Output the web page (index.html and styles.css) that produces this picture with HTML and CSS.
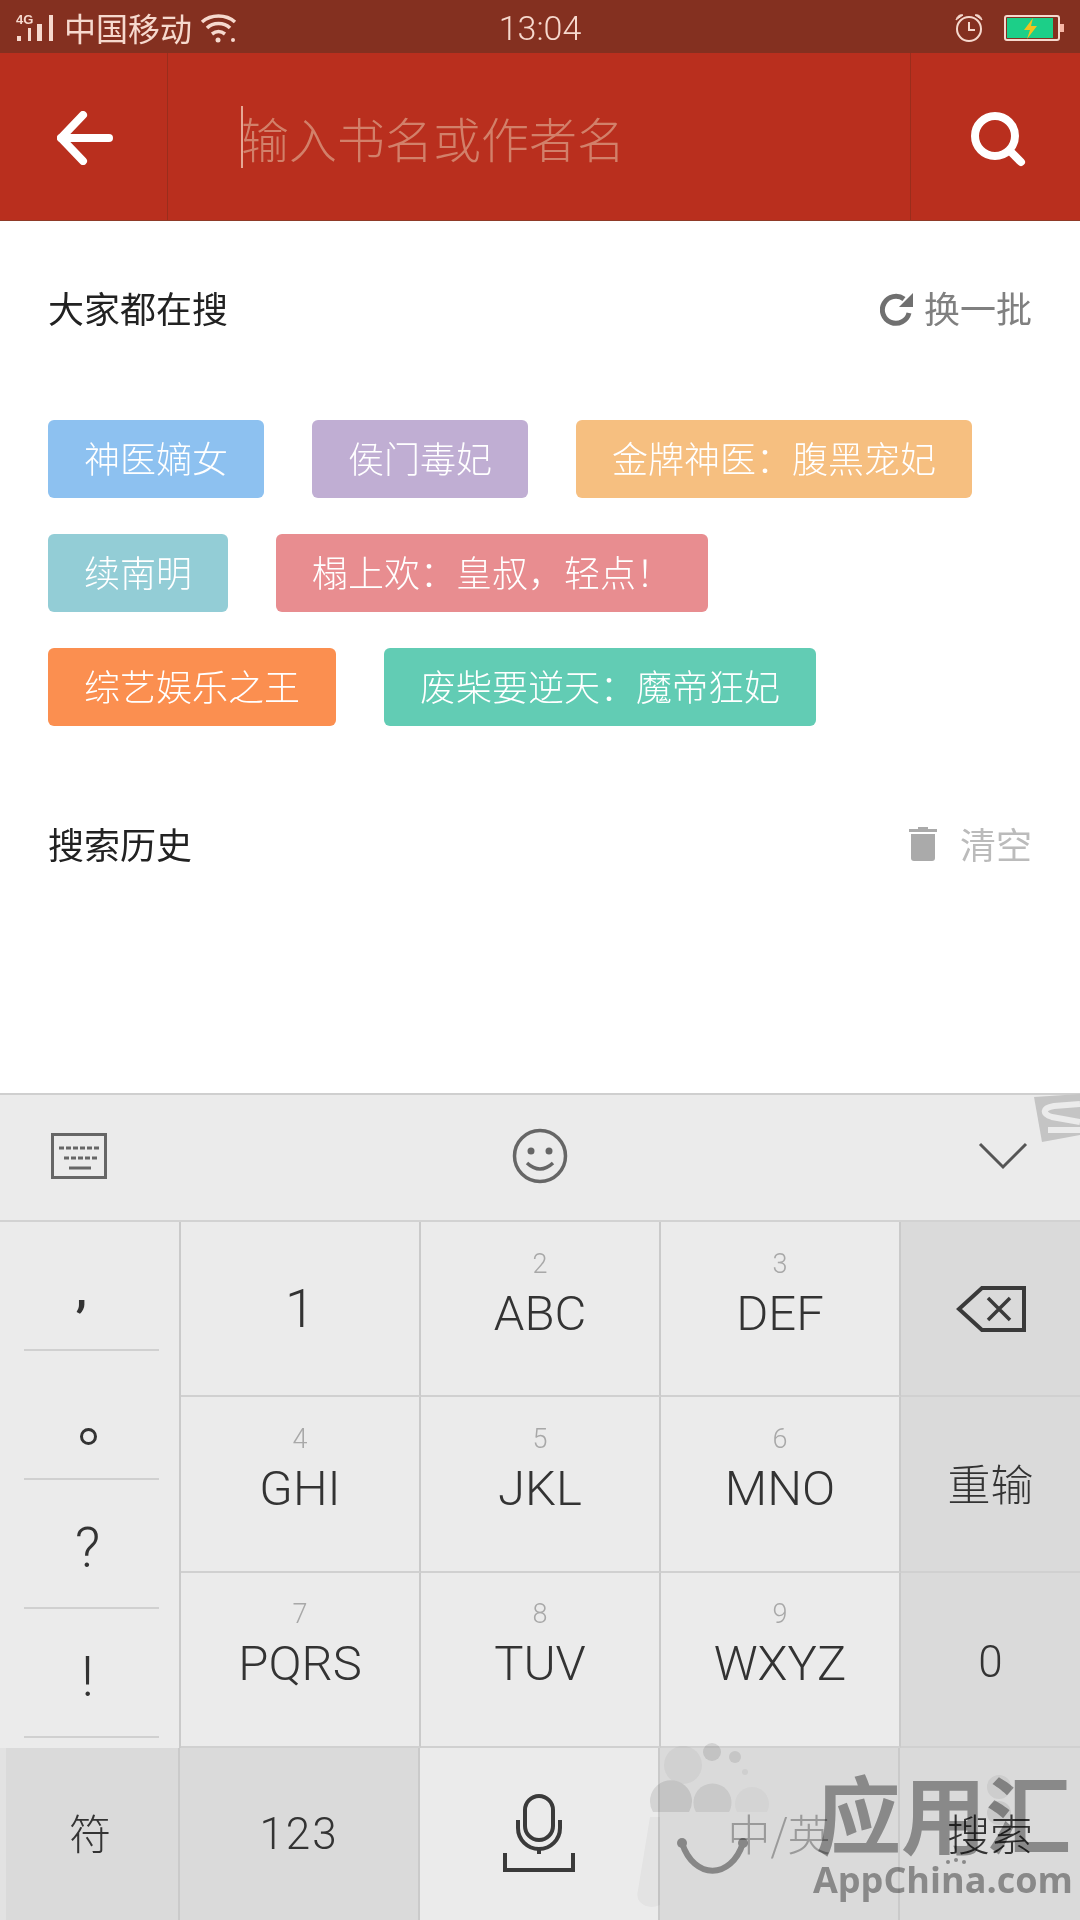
FILE: index.html
```html
<!DOCTYPE html>
<html lang="zh">
<head>
    <meta charset="UTF-8">
    <title>搜索</title>
    <link rel="stylesheet" href="styles.css">
</head>
<body>
    <div class="phone">
        <!-- status bar -->
        <div class="statusbar">
            <div class="status-left">
                <svg class="signal" width="38" height="28" viewBox="0 0 38 28">
                    <text x="0" y="10" class="signal-label">4G</text>
                    <rect x="1" y="22" width="4" height="5" fill="#f6d9ce"/>
                    <rect x="12" y="14" width="3" height="13" fill="#f6d9ce"/>
                    <rect x="21" y="10" width="5" height="17" fill="#f6d9ce"/>
                    <rect x="33" y="1" width="4" height="26" fill="#f6d9ce"/>
                </svg>
                <span class="carrier">中国移动</span>
                <svg class="wifi" width="38" height="30" viewBox="0 0 38 30" fill="none" stroke="#f6d9ce" stroke-width="3.5">
                    <path d="M2 9C11 1 26 1 35 9"/>
                    <path d="M7 15C13 9 24 9 30 15"/>
                    <path d="M12 21C16 18 21 18 25 21" stroke-dasharray="14 3"/>
                    <circle cx="18" cy="27" r="2.5" fill="#f6d9ce" stroke="none"/>
                    <circle cx="33" cy="27" r="2" fill="#f6d9ce" stroke="none"/>
                </svg>
            </div>
            <span class="clock">13:04</span>
            <div class="status-right">
                <svg width="30" height="30" viewBox="0 0 30 30" fill="none" stroke="#f6d9ce">
                    <circle cx="15" cy="16" r="12" stroke-width="2"/>
                    <path d="M15 9V17H21" stroke-width="2"/>
                    <path d="M2 7C3 3 6 1 9 2Z M28 7C27 3 24 1 21 2Z" fill="#f6d9ce" stroke-width="1"/>
                </svg>
                <svg width="60" height="26" viewBox="0 0 60 26">
                    <rect x="1" y="1" width="54" height="24" rx="2" fill="none" stroke="#f6d9ce" stroke-width="2"/>
                    <rect x="3" y="3" width="46" height="20" fill="#1ccf88"/>
                    <rect x="56" y="9" width="4" height="8" fill="#f6b6a6"/>
                    <path d="M29 3L20 15H26L23 24L33 11H27Z" fill="#f2c21f"/>
                </svg>
            </div>
        </div>

        <!-- search bar -->
        <div class="searchbar">
            <div class="search-back">
                <svg width="56" height="54" viewBox="0 0 56 54" fill="none" stroke="#fff" stroke-width="8" stroke-linecap="round" stroke-linejoin="round">
                    <path d="M26 4L4 27L26 50"/>
                    <path d="M4 27H52"/>
                </svg>
            </div>
            <div class="search-input"><span class="caret"></span>输入书名或作者名</div>
            <div class="search-btn">
                <svg width="56" height="56" viewBox="0 0 56 56" fill="none" stroke="#fff" stroke-linecap="round">
                    <circle cx="24" cy="24" r="20" stroke-width="8"/>
                    <path d="M39 39L50 50" stroke-width="8"/>
                </svg>
            </div>
        </div>

        <!-- content -->
        <div class="content">
            <div class="section-head">
                <span class="section-title">大家都在搜</span>
                <span class="section-action">
                    <svg class="icon-refresh" width="34" height="34" viewBox="0 0 34 34" fill="none">
                        <path d="M29 21A13.5 13.5 0 1 1 24 7" stroke="#707070" stroke-width="5"/>
                        <path d="M33 1V15H19Z" fill="#707070"/>
                    </svg>
                    换一批
                </span>
            </div>
            <div class="tags">
                <span class="tag tag-blue">神医嫡女</span>
                <span class="tag tag-purple">侯门毒妃</span>
                <span class="tag tag-sand">金牌神医：腹黑宠妃</span>
                <span class="tag tag-teal">续南明</span>
                <span class="tag tag-rose">榻上欢：皇叔，轻点！</span>
                <span class="tag tag-orange">综艺娱乐之王</span>
                <span class="tag tag-green">废柴要逆天：魔帝狂妃</span>
            </div>
            <div class="section-head section-history">
                <span class="section-title">搜索历史</span>
                <span class="section-action action-clear">
                    <svg width="30" height="36" viewBox="0 0 30 36" fill="#aaaaaa">
                        <path d="M10 2H20V4H29V7H1V4H10Z"/>
                        <path d="M3 9H27V33Q27 36 24 36H6Q3 36 3 33Z"/>
                    </svg>
                    清空
                </span>
            </div>
        </div>

        <!-- keyboard -->
        <div class="keyboard">
            <div class="kb-tools">
                <svg width="56" height="46" viewBox="0 0 56 46" fill="none" stroke="#666">
                    <rect x="1.5" y="1.5" width="53" height="43" stroke-width="3"/>
                    <path d="M8 15H50M13 25H46" stroke-width="3" stroke-dasharray="5 2"/>
                    <path d="M18 35H40" stroke-width="3"/>
                </svg>
                <svg class="kb-smile" width="56" height="56" viewBox="0 0 56 56" fill="none" stroke="#666" stroke-width="3.5">
                    <circle cx="28" cy="28" r="25.5"/>
                    <circle cx="19" cy="23" r="3.5" fill="#666" stroke="none"/>
                    <circle cx="37" cy="23" r="3.5" fill="#666" stroke="none"/>
                    <path d="M15 35Q28 47 41 35"/>
                </svg>
                <svg width="50" height="28" viewBox="0 0 50 28" fill="none" stroke="#555" stroke-width="3">
                    <path d="M2 2L25 25L48 2"/>
                </svg>
            </div>
            <div class="kb-body">
                <div class="kb-symbols">
                    <div class="symbol"><span class="symbol-comma">,</span></div>
                    <div class="symbol"><span class="symbol-dot"></span></div>
                    <div class="symbol">?</div>
                    <div class="symbol">!</div>
                </div>
                <div class="kb-keys">
                    <div class="key key-one">1</div>
                    <div class="key key-abc"><small>2</small>ABC</div>
                    <div class="key key-abc"><small>3</small>DEF</div>
                    <div class="key key-dark">
                        <svg width="70" height="46" viewBox="0 0 70 46" fill="none" stroke="#3a3a3a">
                            <path d="M68 2H26L3 23L26 44H68Z" stroke-width="4"/>
                            <path d="M32 12L54 34M54 12L32 34" stroke-width="3.5"/>
                        </svg>
                    </div>
                    <div class="key key-abc"><small>4</small>GHI</div>
                    <div class="key key-abc"><small>5</small>JKL</div>
                    <div class="key key-abc"><small>6</small>MNO</div>
                    <div class="key key-dark key-cjk">重输</div>
                    <div class="key key-abc"><small>7</small>PQRS</div>
                    <div class="key key-abc"><small>8</small>TUV</div>
                    <div class="key key-abc"><small>9</small>WXYZ</div>
                    <div class="key key-dark key-zero">0</div>
                </div>
            </div>
            <div class="kb-bottom">
                <div class="key key-dark key-cjk key-fu">符</div>
                <div class="key key-dark key-num">123</div>
                <div class="key key-mic">
                    <svg width="74" height="79" viewBox="0 0 74 79" fill="none" stroke="#3a3a3a" stroke-width="4">
                        <rect x="23" y="3" width="28" height="44" rx="14"/>
                        <path d="M16 27V35A21 21 0 0 0 58 35V27"/>
                        <path d="M37 56V61"/>
                        <path d="M3 60V77H71V60"/>
                    </svg>
                </div>
                <div class="key key-dark key-cjk key-faded">中/英</div>
                <div class="key key-dark key-cjk">搜索</div>
            </div>
        </div>

        <!-- watermarks over the keyboard -->
        <svg class="mark-s" width="46" height="50" viewBox="0 0 46 50" fill="none">
            <path d="M0 3L46 0V41L8 48Z" fill="#c4c4c4"/>
            <path d="M46 10L20 12C8 14 8 20 18 23L46 28M46 36H14" stroke="#ebebeb" stroke-width="6"/>
        </svg>
        <svg class="mark-dots" width="68" height="92" viewBox="0 0 68 92">
            <circle cx="54" cy="12" r="12" fill="#f0f0f0"/>
            <circle cx="54" cy="38" r="12" fill="#ececec"/>
            <circle cx="3" cy="87" r="2" fill="#a0a0a0"/>
            <circle cx="11" cy="85" r="2" fill="#a0a0a0"/>
            <circle cx="19" cy="87" r="2" fill="#a0a0a0"/>
        </svg>
        <div class="appchina">
            <svg class="appchina-logo" width="135" height="170" viewBox="0 0 135 170">
                <path d="M14 77H24V165Q12 170 4 162Q0 158 2 150Z" fill="#f7f7f7"/>
                <circle cx="47" cy="25" r="19" fill="#f5f5f5"/>
                <circle cx="76" cy="12" r="9" fill="#e4e4e4"/>
                <circle cx="99" cy="17" r="6" fill="#e8e8e8"/>
                <circle cx="109" cy="32" r="3" fill="#f3f3f3"/>
                <path d="M17 72A21 21 0 1 1 53 72Z" fill="#e6e6e6"/>
                <path d="M60 72A19 19 0 1 1 93 72Z" fill="#ebebeb"/>
                <path d="M101 72A17 17 0 1 1 131 72Z" fill="#f8f8f8"/>
                <path d="M46 103C58 140 95 140 107 103" fill="none" stroke="#9e9e9e" stroke-width="6"/>
                <circle cx="46" cy="103" r="5" fill="#9e9e9e"/>
                <circle cx="107" cy="103" r="5" fill="#9e9e9e"/>
            </svg>
            <div class="appchina-text">
                <div class="appchina-cn">应用汇</div>
                <div class="appchina-en">AppChina.com</div>
            </div>
        </div>
    </div>
</body>
</html>
```

FILE: styles.css
```css
* {
    box-sizing: border-box;
}

body {
    margin: 0;
    font-family: "Noto Sans CJK SC", "Noto Sans", sans-serif;
    background-color: #ffffff;
}

.phone {
    position: relative;
    width: 1080px;
    height: 1920px;
    display: flex;
    flex-direction: column;
    overflow: hidden;
}

/* status bar */
.statusbar {
    height: 53px;
    padding: 0 16px;
    background-color: #843020;
    color: #f6d9ce;
    display: grid;
    grid-template-columns: 1fr auto 1fr;
    align-items: center;
}

.status-left {
    display: flex;
    align-items: center;
    gap: 10px;
}

.signal {
    overflow: visible;
}

.signal-label {
    font-family: "Liberation Sans", sans-serif;
    font-size: 13px;
    font-weight: 700;
    fill: #f6d9ce;
}

.carrier {
    font-size: 32px;
    line-height: 53px;
}

.wifi {
    margin-left: -2px;
}

.clock {
    font-family: Roboto, sans-serif;
    font-weight: 300;
    font-size: 34px;
    line-height: 53px;
    padding-top: 2px;
}

.status-right {
    display: flex;
    justify-content: flex-end;
    align-items: center;
    gap: 20px;
}

/* search bar */
.searchbar {
    height: 168px;
    background-color: #b92f1e;
    border-bottom: 1px solid #8f3a28;
    display: flex;
}

.search-back {
    width: 168px;
    border-right: 1px solid #9a2d1c;
    display: flex;
    align-items: center;
    justify-content: center;
    padding: 3px 0 0 2px;
}

.search-input {
    flex: 1;
    display: flex;
    align-items: center;
    padding-left: 73px;
    font-size: 48px;
    font-weight: 300;
    color: #d2806a;
}

.caret {
    width: 2px;
    height: 62px;
    margin-right: -2px;
    background-color: #e6a794;
}

.search-btn {
    width: 170px;
    border-left: 1px solid #9a2d1c;
    display: flex;
    align-items: center;
    justify-content: center;
    padding: 6px 0 0 6px;
}

/* content */
.content {
    height: 872px;
    padding: 0 48px;
}

.section-head {
    height: 174px;
    padding-bottom: 2px;
    display: flex;
    justify-content: space-between;
    align-items: center;
}

.section-title {
    font-size: 36px;
    color: #222222;
}

.section-action {
    display: flex;
    align-items: center;
    gap: 10px;
    font-size: 36px;
    color: #808080;
}

.icon-refresh {
    margin-top: 4px;
}

.tags {
    margin-top: 25px;
    display: flex;
    flex-wrap: wrap;
    gap: 36px 48px;
}

.tag {
    height: 78px;
    padding: 0 36px;
    border-radius: 6px;
    font-size: 36px;
    font-weight: 300;
    line-height: 75px;
    color: #ffffff;
}

.tag-blue { background-color: #8dc1f0; }
.tag-purple { background-color: #c0aed3; }
.tag-sand { background-color: #f6bf80; margin-right: 20px; }
.tag-teal { background-color: #93cdd6; }
.tag-rose { background-color: #e88d90; margin-right: 200px; }
.tag-orange { background-color: #fb8f50; }
.tag-green { background-color: #62ccb4; }

.section-history {
    height: 168px;
    padding: 66px 0 0;
}

.action-clear {
    gap: 22px;
    color: #bbbbbb;
}

/* keyboard */
.keyboard {
    flex: 1;
    background-color: #ebebeb;
    border-top: 2px solid #cfcfcf;
    display: flex;
    flex-direction: column;
}

.kb-tools {
    height: 127px;
    padding: 0 52px 4px 51px;
    border-bottom: 2px solid #d2d2d2;
    display: flex;
    align-items: center;
    justify-content: space-between;
}

.kb-smile {
    margin-right: 6px;
}

.kb-body {
    display: flex;
    height: 526px;
}

.kb-symbols {
    width: 181px;
    border-right: 2px solid #cacaca;
    padding: 0 20px 10px 24px;
}

.symbol {
    height: 129px;
    padding: 8px 8px 0 0;
    border-bottom: 2px solid #d0d0d0;
    display: flex;
    align-items: center;
    justify-content: center;
    font-family: Roboto, sans-serif;
    font-weight: 300;
    font-size: 56px;
    color: #333333;
}

.symbol-comma {
    font-weight: 700;
    font-size: 46px;
    line-height: 1;
    margin: 0 12px 0 0;
}

.symbol-dot {
    width: 17px;
    height: 17px;
    margin: 36px 0 0 2px;
    border: 3px solid #333333;
    border-radius: 50%;
}

.kb-keys {
    flex: 1;
    display: grid;
    grid-template-columns: 240px 240px 240px 179px;
    grid-template-rows: repeat(3, 1fr);
}

.key {
    display: flex;
    flex-direction: column;
    align-items: center;
    justify-content: center;
    border-right: 2px solid #cacaca;
    border-bottom: 2px solid #d0d0d0;
    font-family: Roboto, sans-serif;
    font-weight: 300;
    font-size: 49px;
    line-height: 56px;
    color: #333333;
}

.key small {
    margin-bottom: 6px;
    font-size: 27px;
    line-height: 32px;
    color: #a8a8a8;
}

.key-abc {
    padding-bottom: 28px;
}

.key-one {
    font-size: 54px;
}

.key-dark {
    background-color: #dadada;
    border-right: none;
}

.key-cjk {
    padding-bottom: 4px;
    font-family: "Noto Sans CJK SC", sans-serif;
    font-size: 43px;
}

.key-zero {
    padding-top: 6px;
    font-size: 44px;
}

.key-num {
    font-size: 44px;
    letter-spacing: 2px;
}

.key-fu {
    padding-right: 4px;
    border-left: 6px solid #e2e2e2;
    font-size: 42px;
}

.key-mic {
    padding-bottom: 3px;
}

.kb-bottom {
    flex: 1;
    display: grid;
    grid-template-columns: 180px 240px 240px 240px 180px;
}

.kb-bottom .key {
    border-bottom: none;
    border-right: 2px solid #cacaca;
}

.kb-bottom .key:last-child {
    border-right: none;
}

.key-faded {
    color: #9a9a9a;
}

/* watermarks */
.mark-s {
    position: absolute;
    top: 1094px;
    right: 0;
}

.mark-dots {
    position: absolute;
    left: 945px;
    top: 1775px;
    mix-blend-mode: multiply;
}

.appchina {
    position: absolute;
    left: 636px;
    top: 1740px;
    display: flex;
    mix-blend-mode: multiply;
}

.appchina-text {
    margin: 24px 0 0 42px;
}

.appchina-cn {
    margin-left: 3px;
    font-family: "Noto Sans CJK SC", sans-serif;
    font-weight: 700;
    font-size: 85px;
    line-height: 93px;
    color: #a0a0a0;
    white-space: nowrap;
}

.appchina-en {
    font-family: "Open Sans", sans-serif;
    font-weight: 700;
    font-size: 36px;
    line-height: 46px;
    color: #a0a0a0;
    white-space: nowrap;
}
```
